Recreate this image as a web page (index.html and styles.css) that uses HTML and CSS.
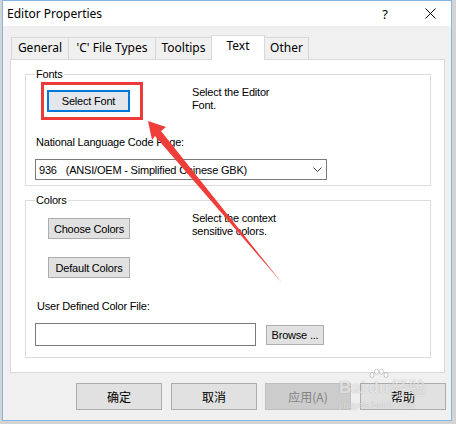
FILE: index.html
```html
<!DOCTYPE html>
<html>
<head>
<meta charset="utf-8">
<title>Editor Properties</title>
<link rel="stylesheet" href="styles.css">
</head>
<body>
<div class="window">
  <div class="titlebar">
    <span class="title">Editor Properties</span>
    <span class="help">?</span>
    <svg class="close" width="11" height="11" viewBox="0 0 11 11"><path d="M0.5 0.5L10.5 10.5M10.5 0.5L0.5 10.5" stroke="#000" stroke-width="1" fill="none"/></svg>
  </div>
  <div class="content">
    <div class="tabs">
      <div class="tab tab-general">General</div>
      <div class="tab tab-ctypes">'C' File Types</div>
      <div class="tab tab-tooltips">Tooltips</div>
      <div class="tab tab-text active">Text</div>
      <div class="tab tab-other">Other</div>
    </div>
    <div class="panel">
      <div class="group group-fonts">
        <span class="legend">Fonts</span>
        <div class="row">
          <button class="btn btn-default btn-selfont">Select Font</button>
          <div class="desc desc-fonts">Select the Editor<br>Font.</div>
        </div>
        <div class="label label-nlcp">National Language Code Page:</div>
        <div class="combo">
          <span class="cp-num">936</span><span class="cp-name">(ANSI/OEM - Simplified Chinese GBK)</span>
          <svg class="chevron" width="9" height="5" viewBox="0 0 9 5"><polyline points="0.5,0.5 4.5,4.5 8.5,0.5" fill="none" stroke="#3c3c3c" stroke-width="1"/></svg>
        </div>
      </div>
      <div class="group group-colors">
        <span class="legend">Colors</span>
        <div class="row">
          <button class="btn btn-colors">Choose Colors</button>
          <div class="desc desc-colors">Select the context<br>sensitive colors.</div>
        </div>
        <button class="btn btn-colors btn-defcolors">Default Colors</button>
        <div class="label label-file">User Defined Color File:</div>
        <div class="file-row">
          <div class="input"></div>
          <button class="btn btn-browse">Browse ...</button>
        </div>
      </div>
    </div>
    <div class="actions">
      <button class="dlg-btn">确定</button>
      <button class="dlg-btn">取消</button>
      <button class="dlg-btn disabled shift">应用(A)</button>
      <button class="dlg-btn">帮助</button>
    </div>
  </div>
</div>

<svg class="annot" width="456" height="424" viewBox="0 0 456 424">
  <rect x="42.5" y="83.5" width="99" height="35" fill="none" stroke="#ef3a3a" stroke-width="3"/>
  <polygon points="148,121 166,127 161,131 282,283 155,136 152,140" fill="#ef3d3a"/>
</svg>

<div class="watermark">
  <div class="wm-logo">
    <span class="wm-bai">Bai</span>
    <span class="wm-du">du
      <svg class="wm-paw" width="20" height="12" viewBox="0 0 20 12">
        <ellipse cx="3" cy="6" rx="2" ry="2.6"/>
        <ellipse cx="7.5" cy="2.6" rx="2" ry="2.6"/>
        <ellipse cx="12.5" cy="2.6" rx="2" ry="2.6"/>
        <ellipse cx="17" cy="6" rx="2" ry="2.6"/>
      </svg>
    </span>
    <span class="wm-jy">经验</span>
  </div>
  <div class="wm-url">jingyan.baidu.com</div>
</div>
</body>
</html>
```
FILE: styles.css
```css
* {
  box-sizing: border-box;
}

html,
body {
  margin: 0;
  padding: 0;
}

body {
  width: 456px;
  height: 424px;
  position: relative;
  overflow: hidden;
  background: #d4d4d4;
  font-family: "Liberation Sans", Arial, sans-serif;
  font-size: 11px;
  letter-spacing: -0.2px;
  color: #000;
}

.window {
  margin-left: 2px;
  width: 450px;
  height: 421px;
  border: 1px solid #86b5e3;
  background: #f0f0f0;
}

.titlebar {
  height: 25px;
  background: #fff;
  display: flex;
  align-items: center;
  padding-left: 4px;
  font-family: "Noto Sans", "Open Sans", sans-serif;
  font-size: 12px;
  letter-spacing: 0;
}

.title {
  flex: 1;
}

.help {
  margin-right: 37px;
  font-size: 13px;
}

.close {
  margin-right: 15px;
}

.content {
  padding-left: 7px;
}

.tabs {
  display: flex;
  align-items: flex-end;
  height: 24px;
  margin-top: 9px;
  margin-left: 1px;
  font-family: "Noto Sans", "Open Sans", sans-serif;
  font-size: 12px;
  letter-spacing: 0;
}

.tab {
  height: 22px;
  border: 1px solid #d9d9d9;
  border-bottom: none;
  background: #f0f0f0;
  margin-right: -1px;
  text-align: center;
  line-height: 20px;
}

.tab.active {
  height: 25px;
  margin-bottom: -1px;
  background: #fff;
  position: relative;
  z-index: 1;
}

.tab-general { width: 58px; }
.tab-ctypes { width: 88px; }
.tab-tooltips { width: 57px; }
.tab-text { width: 54px; }
.tab-other { width: 45px; }

.panel {
  width: 435px;
  height: 314px;
  background: #fff;
  border: 1px solid #d9d9d9;
  padding: 14px 13px 14px 14px;
  display: flex;
  flex-direction: column;
  gap: 14px;
}

.group {
  position: relative;
  border: 1px solid #dcdcdc;
  display: flex;
  flex-direction: column;
  align-items: flex-start;
}

.group-fonts {
  height: 112px;
}

.group-colors {
  height: 158px;
}

.legend {
  position: absolute;
  left: 9px;
  top: -7px;
  padding: 0 1px;
  background: #fff;
  line-height: 13px;
}

.row {
  display: flex;
  align-items: flex-start;
}

.btn {
  margin: 0;
  padding: 0;
  font-family: "Liberation Sans", Arial, sans-serif;
  font-size: 11px;
  letter-spacing: -0.2px;
  color: #000;
  background: #e1e1e1;
  border: 1px solid #adadad;
  display: flex;
  align-items: center;
  justify-content: center;
}

.btn-selfont {
  width: 83px;
  height: 22px;
  margin-left: 21px;
  margin-top: 15px;
}

.btn-default {
  background: #e3e6ea;
  border: 2px solid #0078d7;
}

.desc {
  line-height: 13px;
  margin-left: 62px;
  margin-top: 11px;
}

.label {
  line-height: 13px;
}

.label-nlcp {
  margin-left: 10px;
  margin-top: 24px;
}

.combo {
  width: 292px;
  height: 21px;
  margin-left: 9px;
  margin-top: 10px;
  border: 1px solid #7a7a7a;
  background: #fff;
  display: flex;
  align-items: center;
  padding-left: 3px;
}

.cp-num {
  margin-right: 9px;
}

.chevron {
  margin-left: auto;
  margin-right: 4px;
}

.btn-colors {
  width: 82px;
  height: 21px;
  margin-left: 22px;
  margin-top: 17px;
}

.btn-defcolors {
  margin-top: 18px;
}

.label-file {
  margin-left: 11px;
  margin-top: 22px;
}

.file-row {
  display: flex;
  align-items: center;
  margin-left: 9px;
  margin-top: 10px;
}

.input {
  width: 221px;
  height: 23px;
  border: 1px solid #7a7a7a;
  background: #fff;
}

.btn-browse {
  width: 58px;
  height: 20px;
  margin-left: 10px;
}

.actions {
  display: flex;
  gap: 9px;
  margin-top: 10px;
  margin-left: 66px;
}

.dlg-btn {
  width: 86px;
  height: 27px;
  margin: 0;
  padding: 0;
  font-family: "Noto Sans CJK SC", "Noto Sans", sans-serif;
  font-size: 12px;
  letter-spacing: 0;
  color: #000;
  background: #e1e1e1;
  border: 1px solid #adadad;
}

.dlg-btn.disabled {
  background: #cccccc;
  border-color: #bfbfbf;
  color: #838383;
}

.dlg-btn.shift {
  margin-left: -1px;
}

.annot {
  position: absolute;
  left: 0;
  top: 0;
  pointer-events: none;
}

.watermark {
  position: absolute;
  left: 339px;
  top: 376px;
  pointer-events: none;
  letter-spacing: 0;
  color: rgba(255, 255, 255, 0.7);
  text-shadow: 0 0 1px rgba(110, 110, 110, 0.55);
}

.wm-logo {
  display: flex;
  align-items: flex-end;
  height: 22px;
}

.wm-bai,
.wm-du {
  font-family: "Liberation Sans", Arial, sans-serif;
  font-weight: bold;
  font-size: 17px;
  line-height: 20px;
}

.wm-du {
  position: relative;
  margin-left: 3px;
}

.wm-paw {
  position: absolute;
  left: 1px;
  top: -9px;
  fill: rgba(255, 255, 255, 0.7);
  stroke: rgba(120, 120, 120, 0.45);
  stroke-width: 0.8;
}

.wm-jy {
  font-family: "Noto Sans CJK SC", sans-serif;
  font-size: 18px;
  line-height: 22px;
  margin-left: 1px;
}

.wm-url {
  font-family: "Liberation Sans", Arial, sans-serif;
  font-size: 9.5px;
  line-height: 11px;
  margin-top: 1px;
}
```
